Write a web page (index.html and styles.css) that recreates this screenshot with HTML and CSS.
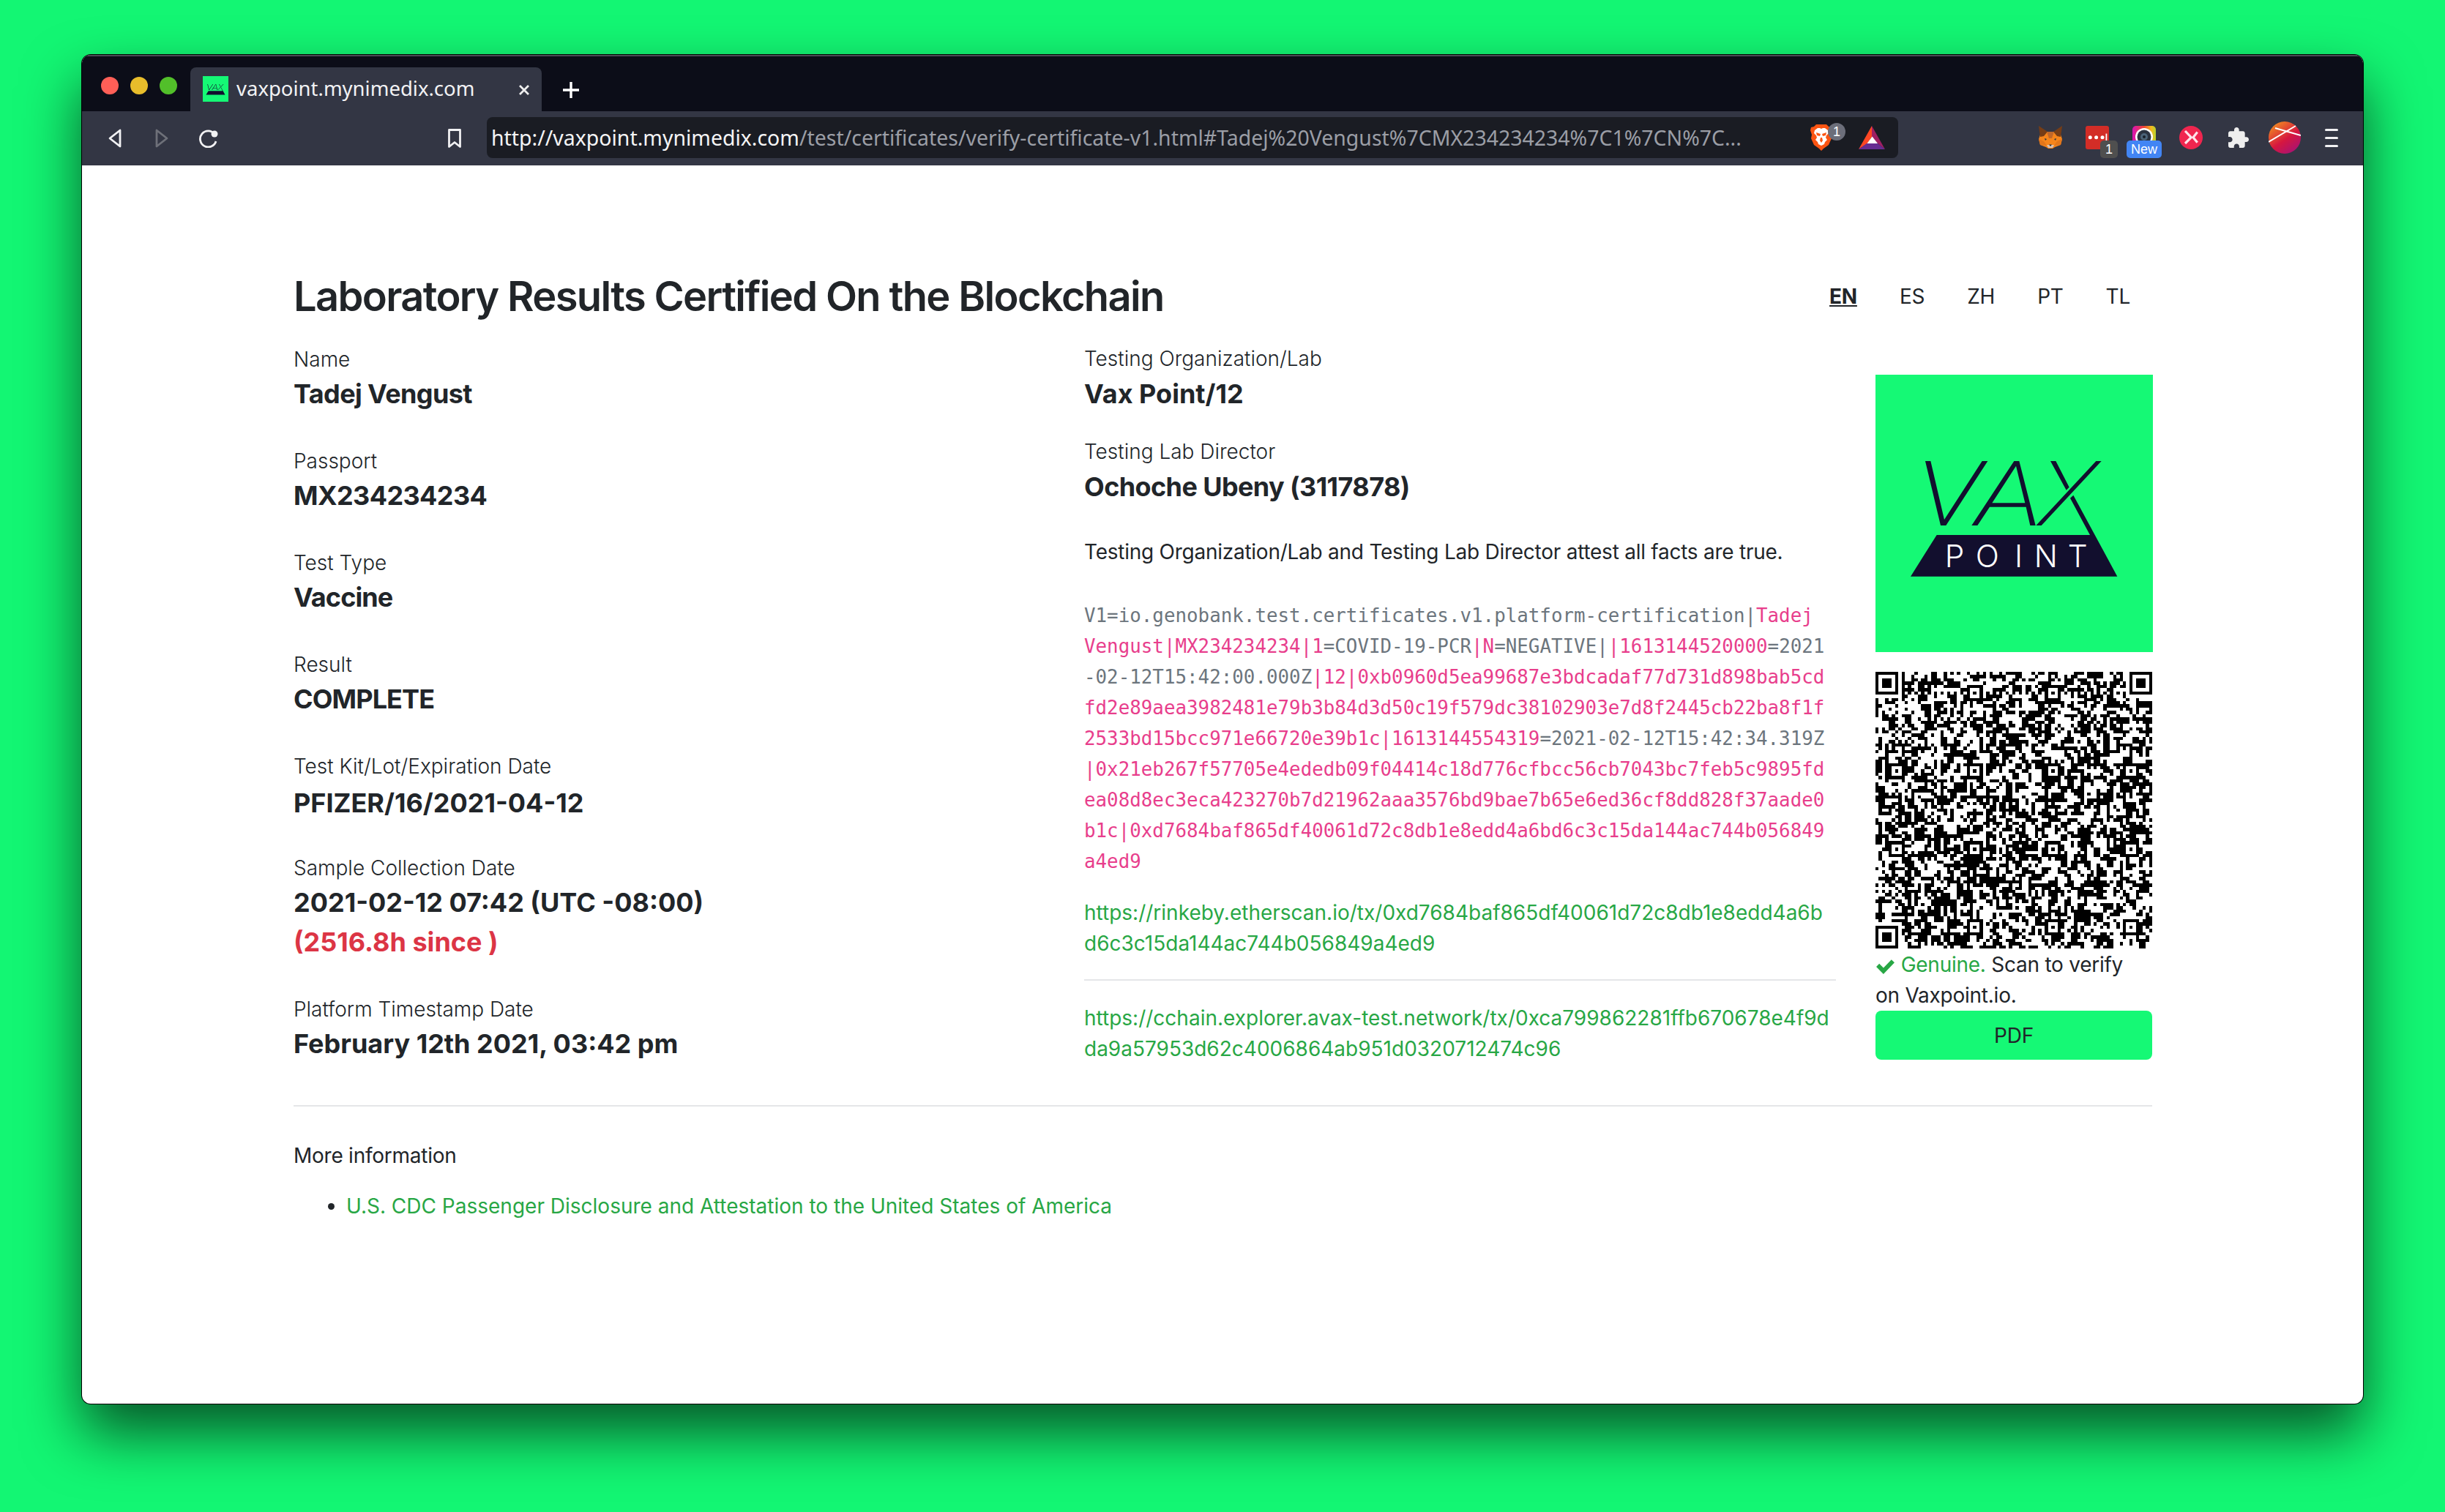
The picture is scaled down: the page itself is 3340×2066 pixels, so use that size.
FILE: index.html
```html
<!DOCTYPE html>
<html lang="en">
<head>
<meta charset="utf-8">
<title>Laboratory Results Certified On the Blockchain</title>
<link rel="stylesheet" href="styles.css">
</head>
<body>
<svg class="defs" width="0" height="0" aria-hidden="true">
  <symbol id="vaxmark" viewBox="66 96 1137 1137">
    <rect x="66" y="96" width="1137" height="1137" fill="#15f975"/>
    <path fill="#120f2e" d="M270 450h22l56 240L503 450h23L355 714h-22z"/>
    <path fill="#120f2e" fill-rule="evenodd" d="M460 714 634 450h21l67 264h-22l-17-76H534l-50 76zM544 622h135L642 470z"/>
    <path fill="#120f2e" d="M783 450h22l55 107-12 12zM970 450h22L746 714h-22z"/>
    <path fill="#120f2e" d="M864 602l13-12 180 333H210l107-170h628z"/>
  </symbol>
</svg>

<div class="window">
  <header class="tabstrip">
    <span class="light light-red"></span>
    <span class="light light-yellow"></span>
    <span class="light light-green"></span>
    <div class="tab">
      <svg class="favicon"><use href="#vaxmark"/></svg>
      <span class="tab-title">vaxpoint.mynimedix.com</span>
      <svg class="tab-close" viewBox="0 0 16 16"><path d="M2 2l12 12M14 2L2 14"/></svg>
    </div>
    <svg class="new-tab" viewBox="0 0 24 24"><path d="M12 1v22M1 12h22"/></svg>
  </header>

  <nav class="toolbar">
    <svg class="tool tool-back" viewBox="0 0 20 26"><path d="M17 2 3 13l14 11z"/></svg>
    <svg class="tool tool-forward" viewBox="0 0 20 26"><path d="M3 2l14 11L3 24z"/></svg>
    <svg class="tool tool-reload" viewBox="0 0 28 26"><path d="M22 7a11 11 0 1 0 2 10"/><circle cx="22" cy="7" r="4.500"/></svg>
    <svg class="tool tool-mark" viewBox="0 0 20 28"><path d="M2.500 2.500h15v23L10 19.500 2.500 25.500z"/></svg>
    <div class="urlbox">
      <span class="url"><span class="url-host">http://vaxpoint.mynimedix.com</span>/test/certificates/verify-certificate-v1.html#Tadej%20Vengust%7CMX234234234%7C1%7CN%7C...</span>
      <span class="ext-brave">
        <svg viewBox="0 0 30 36" width="30" height="36">
          <path fill="#fb5412" d="M8 0h14l3 3 4 1 1 4-2 6 1 5-4 9-7 5-3 3-3-3-7-5-4-9 1-5-2-6 1-4 4-1z"/>
          <path fill="#fff" d="M10 5h3l2 1 2-1h3l4 3 1 4-3 3-1 3 2 3-3 3-1 3-4 2-4-2-1-3-3-3 2-3-1-3-3-3 1-4z"/>
          <path fill="#fb5412" d="M8 11l6 2-1 3-4-1zM22 11l-6 2 1 3 4-1zM14 18h2l1 4-2 3-2-3z"/>
        </svg>
        <span class="badge badge-brave">1</span>
      </span>
      <svg class="ext-bat" viewBox="0 0 36 32" width="36" height="32">
        <path fill="#ff4724" d="M18 0 0 32l12-8 6-9z"/>
        <path fill="#9e1f63" d="M18 0l18 32-10-8-8-9z"/>
        <path fill="#662d91" d="M0 32h36l-10-8H11z"/>
        <path fill="#fff" d="M18.500 14.500l7.500 9.500H11.500z"/>
      </svg>
    </div>
    <div class="extensions">
      <svg class="ext-icon" viewBox="0 0 32 32">
        <path fill="#f6851b" d="M3 9l8-1h10l8 1 3 9-2 8-8 3-3 2h-6l-3-2-8-3-2-8z"/>
        <path fill="#763d16" d="M0 0l12 8-5 6-5 1zM32 0 20 8l5 6 5 1z"/>
        <path fill="#c0672a" d="M11 8h10l-3 9h-4z"/>
        <path fill="#e2761b" d="M0 18l7 3 4 6-9-1zM32 18l-7 3-4 6 9-1z"/>
        <path fill="#d7c1b3" d="M11 26h10l-2 4h-6z"/>
        <path fill="#233447" d="M8 17l3 1-2 2zM24 17l-3 1 2 2zM14 25.500h4l-2 2.500z"/>
      </svg>
      <span class="ext-slot">
        <svg class="ext-icon" viewBox="0 0 32 32">
          <rect width="32" height="32" rx="3" fill="#d32d27"/>
          <circle cx="6.300" cy="15.700" r="2.500" fill="#fff"/><circle cx="14.600" cy="15.700" r="2.500" fill="#fff"/><circle cx="23" cy="15.700" r="2.500" fill="#fff"/><rect x="27.500" y="10.600" width="1.800" height="10" fill="#fff"/>
        </svg>
        <span class="badge badge-gray">1</span>
      </span>
      <span class="ext-slot">
        <svg class="ext-icon" viewBox="0 0 32 32">
          <defs><linearGradient id="rainbow" x1="0" y1="0.500" x2="1" y2="0.500"><stop offset="0" stop-color="#d812b8"/><stop offset=".5" stop-color="#f0452f"/><stop offset=".8" stop-color="#f5b81f"/><stop offset="1" stop-color="#b5d22f"/></linearGradient></defs>
          <rect width="32" height="32" rx="5" fill="url(#rainbow)"/>
          <circle cx="16" cy="15" r="12" fill="#fff"/>
          <circle cx="16" cy="15" r="9.500" fill="#2b3340"/>
          <circle cx="16" cy="15" r="5" fill="#4c6478"/>
          <circle cx="16" cy="15" r="2" fill="#18202a"/>
        </svg>
        <span class="badge badge-new">New</span>
      </span>
      <svg class="ext-icon" viewBox="0 0 32 32">
        <circle cx="16" cy="16" r="16" fill="#f0264f"/>
        <path fill="none" stroke="#ffe4ea" stroke-width="3.200" d="M8 7l8.300 8.700L8 24M24.700 8.600 19 15.700l5.700 7"/>
      </svg>
      <svg class="ext-puzzle" viewBox="2 1 21 21">
        <path fill="#eeeeee" d="M20.500 11H19V7c0-1.100-.9-2-2-2h-4V3.500C13 2.120 11.880 1 10.500 1S8 2.120 8 3.500V5H4c-1.100 0-1.990.9-1.990 2v3.800H3.500c1.490 0 2.700 1.210 2.700 2.700s-1.210 2.700-2.700 2.700H2V20c0 1.100.9 2 2 2h3.800v-1.500c0-1.490 1.210-2.700 2.700-2.700 1.490 0 2.700 1.210 2.700 2.700V22H17c1.100 0 2-.9 2-2v-4h1.500c1.380 0 2.500-1.120 2.500-2.500S21.880 11 20.500 11z"/>
      </svg>
      <svg class="avatar" viewBox="0 0 44 44">
        <defs><linearGradient id="avatarfill" x1="0.150" y1="0" x2="0.850" y2="1"><stop offset="0" stop-color="#f2941f"/><stop offset=".55" stop-color="#d6173f"/><stop offset="1" stop-color="#a3127a"/></linearGradient></defs>
        <circle cx="22" cy="22" r="22" fill="url(#avatarfill)"/>
        <path stroke="#fff" stroke-width="2" fill="none" d="M9 9l35 10M0 28 37 6"/>
      </svg>
      <span class="menu"><i></i><i></i><i></i></span>
    </div>
  </nav>

  <main class="page">
    <div class="page-head">
      <h1 class="title">Laboratory Results Certified On the Blockchain</h1>
      <ul class="langs">
        <li class="lang lang-active">EN</li>
        <li class="lang">ES</li>
        <li class="lang">ZH</li>
        <li class="lang">PT</li>
        <li class="lang">TL</li>
      </ul>
    </div>

    <div class="columns">
      <section class="col-left">
        <div class="field"><div class="label">Name</div><div class="value">Tadej Vengust</div></div>
        <div class="field"><div class="label">Passport</div><div class="value">MX234234234</div></div>
        <div class="field"><div class="label">Test Type</div><div class="value value-tight">Vaccine</div></div>
        <div class="field"><div class="label">Result</div><div class="value value-tight">COMPLETE</div></div>
        <div class="field field-kit"><div class="label">Test Kit/Lot/Expiration Date</div><div class="value value-wide">PFIZER/16/2021-04-12</div></div>
        <div class="field"><div class="label">Sample Collection Date</div><div class="value value-wide">2021-02-12 07:42 (UTC -08:00)</div><div class="value value-wide value-red">(2516.8h since )</div></div>
        <div class="field"><div class="label">Platform Timestamp Date</div><div class="value value-wide">February 12th 2021, 03:42 pm</div></div>
      </section>

      <section class="col-mid">
        <div class="field field-tight"><div class="label">Testing Organization/Lab</div><div class="value value-wide">Vax Point/12</div></div>
        <div class="field field-tight"><div class="label">Testing Lab Director</div><div class="value">Ochoche Ubeny (3117878)</div></div>
        <p class="attest">Testing Organization/Lab and Testing Lab Director attest all facts are true.</p>
        <p class="proof">V1=io.genobank.test.certificates.v1.platform-certification|<code>Tadej</code><br><code>Vengust|MX234234234|1</code>=COVID-19-PCR<code>|N</code>=NEGATIVE|<code>|1613144520000</code>=2021<br>-02-12T15:42:00.000Z<code>|12|0xb0960d5ea99687e3bdcadaf77d731d898bab5cd</code><br><code>fd2e89aea3982481e79b3b84d3d50c19f579dc38102903e7d8f2445cb22ba8f1f</code><br><code>2533bd15bcc971e66720e39b1c|1613144554319</code>=2021-02-12T15:42:34.319Z<br><code>|0x21eb267f57705e4ededb09f04414c18d776cfbcc56cb7043bc7feb5c9895fd</code><br><code>ea08d8ec3eca423270b7d21962aaa3576bd9bae7b65e6ed36cf8dd828f37aade0</code><br><code>b1c|0xd7684baf865df40061d72c8db1e8edd4a6bd6c3c15da144ac744b056849</code><br><code>a4ed9</code></p>
        <a class="link link-block" href="#">https://rinkeby.etherscan.io/tx/0xd7684baf865df40061d72c8db1e8edd4a6bd6c3c15da144ac744b056849a4ed9</a>
        <hr class="rule rule-mid">
        <a class="link link-block" href="#">https://cchain.explorer.avax-test.network/tx/0xca799862281ffb670678e4f9dda9a57953d62c4006864ab951d0320712474c96</a>
      </section>

      <aside class="col-right">
        <svg class="brand" viewBox="66 96 1137 1137">
          <use href="#vaxmark" x="66" y="96" width="1137" height="1137"/>
          <text class="logo-text" x="350 476 636 716 854" y="885">POINT</text>
        </svg>
        <svg class="qr" id="qr" viewBox="0 0 85 85" shape-rendering="crispEdges"></svg>
        <p class="genuine"><svg class="check" viewBox="0 0 26 20"><path d="M1 10.500l4-4 5.500 5.500L21 1l4 4-14.500 15z"/></svg> <span class="genuine-word">Genuine.</span> Scan to verify on Vaxpoint.io.</p>
        <a class="pdf" href="#">PDF</a>
      </aside>
    </div>

    <hr class="rule">
    <p class="more">More information</p>
    <ul class="more-list">
      <li><a class="link" href="#">U.S. CDC Passenger Disclosure and Attestation to the United States of America</a></li>
    </ul>
  </main>
</div>
<script src="qr.js"></script>
</body>
</html>
```

FILE: styles.css
```css
* { box-sizing: border-box; }
html, body { margin: 0; height: 100%; }
body {
  background: #13f673;
  padding: 75px 112px 148px;
  font-family: Inter, "Noto Sans", sans-serif;
  font-size: 28px;
  line-height: 42px;
  letter-spacing: -.25px;
  color: #212529;
}
.defs { display: block; height: 0; }
.logo-text { font-family: Inter, sans-serif; font-weight: 300; font-size: 127px; fill: #fff; letter-spacing: 0; }

.window {
  height: 1843px;
  background: #fff;
  border-radius: 12px;
  overflow: hidden;
  box-shadow: 0 0 0 1px #000, 0 40px 80px rgba(0, 0, 0, .65);
}

.tabstrip {
  height: 77px;
  background: #0c0d18;
  border-top: 2px solid #4a4b55;
  display: flex;
  align-items: flex-start;
  padding-left: 26px;
  gap: 16px;
}
.light { width: 24px; height: 24px; border-radius: 50%; margin-top: 28px; flex: none; }
.light-red { background: #ff5f57; }
.light-yellow { background: #e8bd2b; }
.light-green { background: #52bf2a; }
.tab {
  width: 480px;
  height: 60px;
  margin: 15px 0 0 2px;
  padding: 12px 16px 0 17px;
  background: #333644;
  border-radius: 8px 8px 0 0;
  display: flex;
  align-items: flex-start;
}
.favicon { width: 35px; height: 35px; flex: none; }
.tab-title {
  margin: -1px 0 0 11px;
  font-family: "Noto Sans", sans-serif;
  font-size: 27.500px;
  line-height: 36px;
  letter-spacing: 0;
  color: #f2f2f4;
}
.tab-close { width: 16px; height: 16px; margin: 11px 0 0 auto; fill: none; stroke: #eee; stroke-width: 2.800; }
.new-tab { width: 24px; height: 24px; margin: 34px 0 0 12px; fill: none; stroke: #fff; stroke-width: 3.400; }

.toolbar {
  height: 74px;
  background: #333644;
  display: flex;
  align-items: center;
  padding-left: 35px;
}
.tool { fill: none; stroke: #f1f1f3; stroke-width: 2.800; stroke-linejoin: round; flex: none; }
.tool-back { width: 20px; height: 26px; }
.tool-forward { width: 20px; height: 26px; margin-left: 44px; stroke: #6e7079; }
.tool-reload { width: 28px; height: 26px; margin-left: 40px; }
.tool-reload circle { fill: #f1f1f3; stroke: none; }
.tool-mark { width: 20px; height: 28px; margin-left: 312px; }
.urlbox {
  width: 1928px;
  height: 56px;
  margin: -2px 0 0 34px;
  padding: 0 18px 0 6px;
  background: #1a1c23;
  border-radius: 8px;
  display: flex;
  align-items: center;
  flex: none;
}
.url {
  flex: 1;
  font-family: "Noto Sans", sans-serif;
  font-size: 28.450px;
  line-height: 36px;
  letter-spacing: 0;
  color: #9b9ea6;
  white-space: nowrap;
}
.url-host { color: #f4f4f5; }
.ext-brave { position: relative; display: block; width: 30px; height: 36px; margin-right: 36px; flex: none; }
.ext-brave svg { display: block; }
.ext-bat { flex: none; }
.badge {
  position: absolute;
  display: block;
  text-align: center;
  color: #fff;
  font-family: "Liberation Sans", sans-serif;
  font-size: 18px;
  line-height: 24px;
  letter-spacing: 0;
  border-radius: 5px;
}
.badge-brave { left: 24px; top: -2px; width: 24px; height: 24px; border-radius: 12px; background: #6c6e7a; }
.badge-gray { left: 20px; top: 20px; width: 24px; height: 24px; background: #4f4f4f; }
.badge-new { left: -8px; top: 20px; width: 48px; height: 24px; background: #4285f4; }
.extensions { display: flex; align-items: center; margin-left: 192px; margin-top: -2px; }
.ext-icon { display: block; width: 32px; height: 32px; flex: none; }
.ext-slot { position: relative; display: block; width: 32px; height: 32px; margin-left: 32px; }
.extensions > .ext-icon:nth-of-type(n+2) { margin-left: 32px; }
.ext-puzzle { width: 28px; height: 28px; margin-left: 35px; flex: none; }
.avatar { width: 44px; height: 44px; margin-left: 27px; flex: none; }
.menu { display: flex; flex-direction: column; gap: 8px; width: 18px; margin-left: 33px; }
.menu i { display: block; height: 3px; border-radius: 2px; background: #f1f1f3; }

.page { padding: 142px 288px 0 289px; }
.page-head { display: flex; align-items: center; justify-content: space-between; height: 74px; }
.title { margin: 0; font-size: 56px; line-height: 67px; font-weight: 600; letter-spacing: -1.650px; }
.langs { display: flex; margin: 0; padding: 0; list-style: none; }
.lang { padding: 16px 29px; }
.lang:last-child { padding-right: 30px; }
.lang-active { font-weight: 700; text-decoration: underline; }

.columns { display: flex; margin-top: 27px; }
.col-left { width: 1080px; flex: none; }
.col-mid { width: 1027px; flex: none; }
.col-right { width: 378px; margin-left: 54px; flex: none; }

.field { margin-bottom: 43px; }
.field:last-child { margin-bottom: 0; }
.field-tight { margin-bottom: 31px; }
.field-kit { margin-bottom: 40px; }
.field-kit .value { margin-top: 3px; }
.label { font-size: 28px; line-height: 42px; font-weight: 350; letter-spacing: 0; }
.col-left .label { padding-top: 2px; line-height: 40px; }
.value { font-size: 36px; line-height: 54px; font-weight: 700; letter-spacing: -.6px; }
.value-tight { letter-spacing: -.9px; }
.value-wide { letter-spacing: 0; }
.value-red { color: #dc3545; }

.attest { margin: 41px 0 45px; }
.proof {
  margin: 0 0 28px;
  font-family: "DejaVu Sans Mono", monospace;
  font-size: 25.850px;
  line-height: 42px;
  letter-spacing: 0;
  color: #6c757d;
  white-space: nowrap;
}
.proof code { font: inherit; color: #e83e8c; }
.link { color: #28a745; text-decoration: none; letter-spacing: 0; }
.link-block { display: block; max-width: 1022px; word-break: break-all; }
.rule { border: 0; border-top: 2px solid #e5e6e8; margin: 56px 0 0; }
.rule-mid { margin: 28px 0 30px; }

.brand { display: block; width: 379px; height: 379px; margin-top: 43px; }
.qr { display: block; width: 378px; height: 378px; margin-top: 27px; }
.genuine { margin: 1px 0 0; }
.genuine-word { color: #28a745; }
.check { width: 27px; height: 21px; fill: #28a745; vertical-align: -3px; }
.pdf {
  display: block;
  height: 67px;
  background: #15f975;
  border-radius: 8px;
  text-align: center;
  line-height: 69px;
  color: #212529;
  text-decoration: none;
}

.more { margin: 46px 0 27px; }
.more-list { margin: 0; padding-left: 72px; }
```

FILE: qr.js
```js
(function () {
  var N = 85, grid = [], reserved = [], seed = 20210212;
  function rnd() { seed = (seed * 1664525 + 1013904223) >>> 0; return seed / 4294967296; }
  for (var y = 0; y < N; y++) { grid.push(new Array(N).fill(0)); reserved.push(new Array(N).fill(false)); }
  function set(x, y, v) { if (x >= 0 && y >= 0 && x < N && y < N) { grid[y][x] = v; reserved[y][x] = true; } }
  function finder(cx, cy) {
    for (var dy = -4; dy <= 4; dy++) for (var dx = -4; dx <= 4; dx++) {
      var d = Math.max(Math.abs(dx), Math.abs(dy));
      set(cx + dx, cy + dy, d === 4 || d === 2 ? 0 : 1);
    }
  }
  function align(cx, cy) {
    for (var dy = -2; dy <= 2; dy++) for (var dx = -2; dx <= 2; dx++) {
      set(cx + dx, cy + dy, Math.max(Math.abs(dx), Math.abs(dy)) === 1 ? 0 : 1);
    }
  }
  finder(3, 3); finder(N - 4, 3); finder(3, N - 4);
  [6, 30, 54, 78].forEach(function (a) {
    [6, 30, 54, 78].forEach(function (b) {
      if ((a === 6 && b === 6) || (a === 78 && b === 6) || (a === 6 && b === 78)) return;
      align(a, b);
    });
  });
  for (var i = 8; i < N - 8; i++) {
    if (!reserved[6][i]) set(i, 6, (i + 1) % 2);
    if (!reserved[i][6]) set(6, i, (i + 1) % 2);
  }
  for (y = 0; y < N; y++) {
    var prev = 0;
    for (var x = 0; x < N; x++) {
      if (reserved[y][x]) { prev = grid[y][x]; continue; }
      var v;
      if (y > 0 && rnd() < 0.18) v = grid[y - 1][x];
      else v = rnd() < 0.56 ? prev : 1 - prev;
      grid[y][x] = v; prev = v;
    }
  }
  var d = '';
  for (y = 0; y < N; y++) {
    for (x = 0; x < N; x++) {
      if (!grid[y][x]) continue;
      var s = x;
      while (x + 1 < N && grid[y][x + 1]) x++;
      d += 'M' + s + ' ' + y + 'h' + (x - s + 1) + 'v1h-' + (x - s + 1) + 'z';
    }
  }
  var p = document.createElementNS('http://www.w3.org/2000/svg', 'path');
  p.setAttribute('d', d);
  p.setAttribute('fill', '#000');
  document.getElementById('qr').appendChild(p);
})();
```
